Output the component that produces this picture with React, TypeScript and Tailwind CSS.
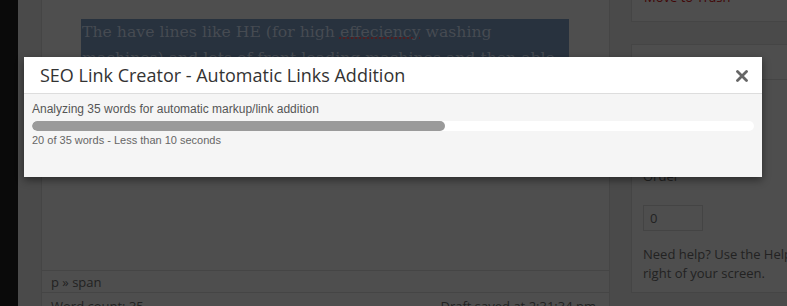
import React from "react";

export default function App() {
  const done = 20;
  const total = 35;
  const pct = (done / total) * 100;
  return (
    <div className="relative w-[787px] h-[306px] overflow-hidden bg-[#4a4a4a] flex" style={{ fontFamily: '"Open Sans", sans-serif' }}>
      {/* admin menu */}
      <div className="w-[18px] shrink-0 bg-[#0a0a0a]" />
      {/* editor column */}
      <div className="ml-[23px] w-[569px] shrink-0 border-l border-r border-[#454545] bg-[#4e4e4e] flex flex-col">
        <div className="h-[270px] shrink-0 pt-[19px] pl-[39px] pr-[40px]">
          <div className="bg-[#28323e] h-[60px] pl-[1px] text-[15.7px] leading-[26px] text-[#464b52]" style={{ fontFamily: '"DejaVu Serif", serif' }}>
            <div>
              The have lines like HE (for high{" "}
              <span className="underline decoration-dotted decoration-[#5a1a1a]">effeciency</span> washing
            </div>
            <div>machines) and lots of front loading machines and then able</div>
          </div>
        </div>
        <div className="h-[23px] border-t border-b border-[#454545] pl-[9px] text-[13px] leading-[22px] text-[#222]">
          p » span
        </div>
        <div className="flex justify-between pl-[9px] pr-[13px] text-[13px] leading-[27px] text-[#222]">
          <span>Word count: 35</span>
          <span>Draft saved at 2:31:34 pm</span>
        </div>
      </div>
      {/* sidebar */}
      <div className="ml-[21px] w-[280px] shrink-0 flex flex-col">
        <div className="h-[22px] bg-[#4e4e4e] border-b border-l border-[#454545] pl-[12px] overflow-hidden">
          <div className="mt-[-12px] text-[13px] leading-[18px] text-[#420505]">Move to Trash</div>
        </div>
        <div className="mt-[22px] h-[249px] bg-[#4e4e4e] border border-r-0 border-[#454545] flex flex-col">
          <div className="h-[35px] border-b border-[#454545] pl-[11px] text-[14px] font-semibold leading-[35px] text-[#222]">
            Page Attributes
          </div>
          <div className="pl-[11px] text-[13px] text-[#222]">
            <div className="mt-[87px] leading-[18px]">Order</div>
            <div className="mt-[20px] w-[60px] h-[26px] border border-[#444] pl-[6px] leading-[24px]">0</div>
            <div className="mt-[14px] leading-[19px]">
              Need help? Use the Help tab in the upper
              <br />
              right of your screen.
            </div>
          </div>
        </div>
      </div>

      {/* modal */}
      <div className="absolute left-[24px] top-[57px] w-[738px] shadow-[0_3px_8px_rgba(0,0,0,0.45)]">
        <div className="h-[37px] bg-white border-b border-[#dddddd] flex items-center justify-between pl-[16px] pr-[14px]">
          <span className="text-[18px] text-[#333] leading-[24px]" style={{ fontFamily: '"Open Sans", sans-serif' }}>
            SEO Link Creator - Automatic Links Addition
          </span>
          <svg width="12" height="12" viewBox="0 0 12 12" className="mt-[1px]">
            <path d="M1.5 1.5 L10.5 10.5 M10.5 1.5 L1.5 10.5" stroke="#666" strokeWidth="2.8" strokeLinecap="round" />
          </svg>
        </div>
        <div className="h-[83px] bg-[#f5f5f5] px-[8px] pt-[8px]" style={{ fontFamily: '"Liberation Sans", Arial, sans-serif' }}>
          <div className="text-[12px] leading-[14px] text-[#555]">Analyzing 35 words for automatic markup/link addition</div>
          <div className="mt-[5px] h-[10px] rounded-full bg-white overflow-hidden">
            <div className="h-full rounded-full bg-[#9a9a9a]" style={{ width: `${pct}%` }} />
          </div>
          <div className="mt-[3px] text-[11px] leading-[13px] text-[#666]">20 of 35 words - Less than 10 seconds</div>
        </div>
      </div>
    </div>
  );
}
